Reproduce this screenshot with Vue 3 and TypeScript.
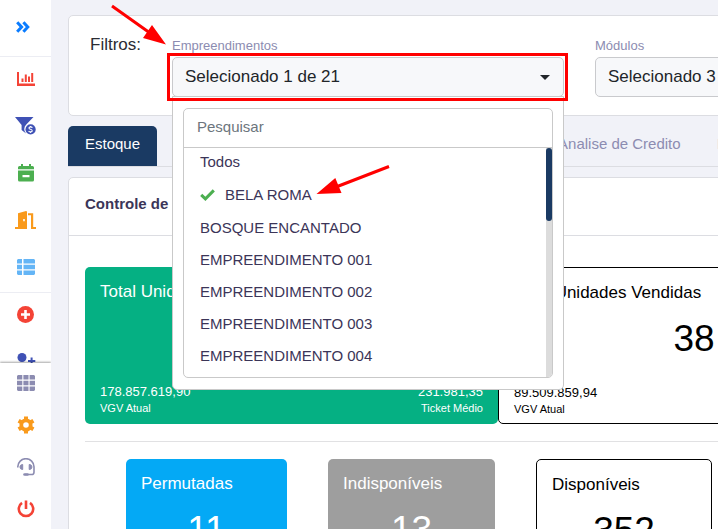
<script setup lang="ts">
import { computed, ref } from 'vue'

interface Option {
  name: string
  selected: boolean
}

const options = ref<Option[]>([
  { name: 'Todos', selected: false },
  { name: 'BELA ROMA', selected: true },
  { name: 'BOSQUE ENCANTADO', selected: false },
  { name: 'EMPREENDIMENTO 001', selected: false },
  { name: 'EMPREENDIMENTO 002', selected: false },
  { name: 'EMPREENDIMENTO 003', selected: false },
  { name: 'EMPREENDIMENTO 004', selected: false },
])

const search = ref('')
const total = 21
const selectedCount = computed(() => options.value.filter((o) => o.selected).length)
const visibleOptions = computed(() =>
  options.value.filter((o) => o.name.toLowerCase().includes(search.value.toLowerCase())),
)

function toggle(option: Option): void {
  option.selected = !option.selected
}
</script>

<template>
  <div class="shell">
    <aside class="rail">
      <button class="expand" type="button">
        <svg width="14" height="12" viewBox="0 0 14 12" fill="none" stroke="#0a7cff" stroke-width="3">
          <path d="M1.200 1.200 5.600 6 1.200 10.800M7.400 1.200 11.800 6 7.400 10.800" />
        </svg>
      </button>
      <nav class="links">
        <div class="group">
          <a href="#" class="item">
            <svg width="18" height="14" viewBox="0 0 18 14" fill="#f44336">
              <path d="M0 0h2v11.6h16V14H0zM4.500 6.500h2V10h-2zM7.800 2.500h2V10h-2zM11 4.500h2V10h-2zM14.200 1h2v9h-2z" />
            </svg>
          </a>
          <a href="#" class="item">
            <svg width="21" height="18" viewBox="0 0 21 18" fill="#3f51b5">
              <path d="M0 0h18.5L11.300 7.600A6 6 0 0 0 11 16.400L6.600 13V8z" />
              <circle cx="15.6" cy="12.4" r="5.1" />
              <path d="M17.4 10.8c-.4-.7-1-.9-1.8-.9-2 0-2.2 2-.3 2.3 2.5.4 2.5 2.7.3 2.700-.9 0-1.600-.3-2-1M15.600 8.900v1M15.600 14.900v1" fill="none" stroke="#fff" stroke-width="1.1" />
            </svg>
          </a>
          <a href="#" class="item">
            <svg width="16" height="18" viewBox="0 0 16 18" fill="#4caf50">
              <path d="M3 0h2v2h6V0h2v2h1.500A1.500 1.500 0 0 1 16 3.500V5.300H0V3.500A1.500 1.500 0 0 1 1.500 2H3z" />
              <path fill-rule="evenodd" d="M0 6.500h16v9.500a1.500 1.500 0 0 1-1.500 1.500h-13A1.500 1.500 0 0 1 0 16zM4.500 11v2.200h7V11z" />
            </svg>
          </a>
          <a href="#" class="item">
            <svg width="21" height="18" viewBox="0 0 21 18" fill="#f99a1c">
              <path fill-rule="evenodd" d="M3 2.200 11 0a1 1 0 0 1 1 1v17H0v-2h3zM8.200 8v2.200h1.600V8z" />
              <path d="M13 2.200h5.200V16H21v2h-5V4.200h-3z" />
            </svg>
          </a>
          <a href="#" class="item">
            <svg width="18" height="16" viewBox="0 0 18 16" fill="#64b5f6">
              <path d="M1 0h4v4.500H0V1zM6.500 0H17l1 1v3.500H6.500zM0 5.700h5v4.500H0zM6.500 5.700H18v4.500H6.500zM0 11.400h5V16H1l-1-1zM6.500 11.400H18V15l-1 1H6.500z" />
            </svg>
          </a>
        </div>
        <div class="group">
          <a href="#" class="item">
            <svg width="17" height="17" viewBox="0 0 17 17">
              <circle cx="8.500" cy="8.500" r="8.500" fill="#f44336" />
              <path d="M8.500 4v9M4 8.500h9" stroke="#fff" stroke-width="2.600" />
            </svg>
          </a>
          <a href="#" class="item">
            <svg width="20" height="18" viewBox="0 0 20 18" fill="#3f51b5">
              <circle cx="6" cy="4.500" r="4.500" />
              <path d="M0 18v-3.500C0 11.500 2 10 4 10h4c2 0 4 1.500 4 4.500V18zM14.600 4.500h2v2.600h2.700v2h-2.700v2.700h-2V9.100H12v-2h2.600z" />
            </svg>
          </a>
        </div>
      </nav>
      <nav class="tools">
        <a href="#" class="tool">
          <svg width="18" height="16" viewBox="0 0 18 16" fill="#8c8cb1">
            <path d="M1 0h4.300v4.500H0V1zM6.400 0h5.100v4.500H6.400zM12.600 0H17l1 1v3.500h-5.400zM0 5.700h5.300v4.500H0zM6.400 5.700h5.100v4.500H6.400zM12.600 5.700H18v4.500h-5.400zM0 11.400h5.300V16H1l-1-1zM6.400 11.400h5.100V16H6.400zM12.600 11.400H18V15l-1 1h-4.400z" />
          </svg>
        </a>
        <a href="#" class="tool">
          <svg width="18" height="18" viewBox="0 0 18 18">
            <circle cx="9" cy="9" r="4.700" fill="none" stroke="#f99a1c" stroke-width="3.800" />
            <path d="M9 .500v3M9 14.500v3M1.600 4.800l2.600 1.500M13.800 11.700l2.600 1.500M1.600 13.200l2.600-1.500M13.800 6.300l2.600-1.500" stroke="#f99a1c" stroke-width="4" />
          </svg>
        </a>
        <a href="#" class="tool">
          <svg width="18" height="18" viewBox="0 0 18 18" fill="none" stroke="#8c8cb1">
            <path d="M.800 9.500V8.800a8 8 0 0 1 16.200 0v5.400a2.300 2.300 0 0 1-2.300 2.300H8" stroke-width="1.600" />
            <path d="M5.700 6.500v5c-1.800 0-2.700-1-2.700-2.500s.900-2.500 2.700-2.500zM12.200 6.500v5c1.800 0 2.700-1 2.700-2.500s-.900-2.500-2.700-2.500z" fill="#8c8cb1" />
            <path d="M7.500 16.500h3" stroke-width="2.600" stroke-linecap="round" />
          </svg>
        </a>
        <a href="#" class="tool">
          <svg width="18" height="18" viewBox="0 0 18 18" fill="none" stroke="#f44336" stroke-width="2.600">
            <path d="M5 2.800a7.200 7.200 0 1 0 8 0M9 .500v8.500" />
          </svg>
        </a>
      </nav>
    </aside>

    <main class="main">
      <section class="panel filters">
        <h2 class="filters-title">Filtros:</h2>
        <div class="field">
          <label class="field-label" for="empreendimentos">Empreendimentos</label>
          <button id="empreendimentos" class="select" type="button" aria-haspopup="listbox">
            <span>Selecionado {{ selectedCount }} de {{ total }}</span>
            <span class="caret"></span>
          </button>
          <div class="menu">
            <div class="menu-box">
              <input v-model="search" class="search" type="text" placeholder="Pesquisar" aria-label="Pesquisar" />
              <div class="menu-scroll">
                <ul class="options">
                  <li v-for="option in visibleOptions" :key="option.name">
                    <button class="option" :class="{ checked: option.selected }" type="button" @click="toggle(option)">
                      <svg v-if="option.selected" width="15" height="12" viewBox="0 0 15 12" fill="none" stroke="#4caf50" stroke-width="3">
                        <path d="M1.200 5.800 5.400 9.800 13.800 1.400" />
                      </svg>
                      <span>{{ option.name }}</span>
                    </button>
                  </li>
                </ul>
                <div class="track"><div class="thumb"></div></div>
              </div>
            </div>
          </div>
        </div>
        <div class="field">
          <label class="field-label" for="modulos">Módulos</label>
          <button id="modulos" class="select" type="button">
            <span>Selecionado 3</span>
            <span class="caret"></span>
          </button>
        </div>
      </section>

      <div class="tabs">
        <button class="tab active" type="button">Estoque</button>
        <div class="tabs-more">
          <button class="tab" type="button">Analise de Credito</button>
          <button class="tab" type="button">I</button>
        </div>
      </div>

      <section class="panel stock">
        <h2 class="stock-title">Controle de Estoque</h2>
        <div class="stock-body">
          <div class="summary">
            <article class="card green">
              <h3 class="card-title">Total Unidades</h3>
              <div class="values">
                <p class="value">178.857.619,90<small>VGV Atual</small></p>
                <p class="value right">231.981,35<small>Ticket Médio</small></p>
              </div>
            </article>
            <article class="card outline">
              <h3 class="card-title">Total Unidades Vendidas</h3>
              <p class="number">38</p>
              <div class="values">
                <p class="value">89.509.859,94<small>VGV Atual</small></p>
              </div>
            </article>
          </div>
          <hr class="rule" />
          <div class="breakdown">
            <article class="card blue">
              <h3 class="card-title">Permutadas</h3>
              <p class="number">11</p>
            </article>
            <article class="card gray">
              <h3 class="card-title">Indisponíveis</h3>
              <p class="number">13</p>
            </article>
            <article class="card outline">
              <h3 class="card-title">Disponíveis</h3>
              <p class="number">352</p>
            </article>
          </div>
        </div>
      </section>
    </main>

    <div class="highlight"></div>
    <svg class="arrows" width="400" height="210" viewBox="0 0 400 210">
      <path d="M112 6 150 33M389 166.500 336 187" stroke="#f00" stroke-width="3" />
      <path d="M166 44.500 152 25 143 38zM316.500 194 335.300 178 341.500 193z" fill="#f00" />
    </svg>
  </div>
</template>

<style>
body {
  background: #f1f2f8;
}
</style>

<style scoped>
* {
  box-sizing: border-box;
  margin: 0;
}

.shell {
  position: relative;
  display: flex;
  height: 100vh;
  overflow: hidden;
  background: #f1f2f8;
  color: #3b3558;
  font-family: "Liberation Sans", Arial, sans-serif;
  font-size: 15px;
}

button,
input {
  padding: 0;
  border: 0;
  background: none;
  color: inherit;
  font: inherit;
}

.rail {
  display: flex;
  flex: none;
  flex-direction: column;
  width: 51px;
  background: #fff;
}

.expand {
  display: flex;
  flex: none;
  align-items: center;
  justify-content: center;
  height: 57px;
  padding: 0 5px 2px 0;
  border-bottom: 1px solid #ecedf3;
}

.links {
  flex: 1;
  min-height: 0;
  overflow: hidden;
}

.group + .group {
  border-top: 1px solid #ecedf3;
}

.item {
  display: flex;
  align-items: center;
  justify-content: center;
  height: 47px;
  padding-bottom: 4px;
}

.tools {
  display: flex;
  flex: none;
  flex-direction: column;
  gap: 24px;
  padding: 11px 0;
  background: #fff;
  box-shadow: 0 -1px 2px rgba(0, 0, 0, 0.35);
  clip-path: inset(-3px 0 0 0);
}

.tool {
  display: flex;
  align-items: center;
  justify-content: center;
  height: 18px;
}

.main {
  flex: 1 0 auto;
  padding: 15px 0 0 17px;
}

.panel {
  border: 1px solid #dcdde2;
  border-radius: 5px;
  background: #fff;
}

.filters {
  display: flex;
  padding: 21px 21px 18px;
}

.filters-title {
  width: 82px;
  color: #2b2c33;
  font-size: 17px;
  font-weight: 400;
  line-height: 16px;
}

.field {
  position: relative;
  flex: 0 0 392px;
  margin-right: 31px;
}

.field-label {
  display: block;
  height: 20px;
  color: #8c8cb1;
  font-size: 13px;
  line-height: 18px;
}

.select {
  display: flex;
  align-items: center;
  justify-content: space-between;
  width: 100%;
  height: 40px;
  padding: 0 13px 0 12px;
  border: 1px solid #c9cacd;
  border-radius: 5px;
  background: #f7f8fa;
  color: #212529;
  font-size: 17px;
}

.caret {
  border: 5px solid transparent;
  border-top-color: #212529;
  border-bottom-width: 0;
}

.menu {
  position: absolute;
  z-index: 2;
  top: 59px;
  right: 0;
  left: 0;
  padding: 11px 10px;
  border: 1px solid #c9c9c9;
  border-radius: 0 0 5px 5px;
  background: #fff;
}

.menu-box {
  overflow: hidden;
  border: 1px solid #c9c9c9;
  border-radius: 5px;
}

.search {
  display: block;
  width: 100%;
  height: 39px;
  padding: 0 13px 3px;
  border-bottom: 1px solid #c9c9c9;
  outline: 0;
}

.search::placeholder {
  color: #6c757d;
  opacity: 1;
}

.menu-scroll {
  display: flex;
  height: 229px;
}

.options {
  flex: 1;
  padding: 0 16px;
  list-style: none;
}

.option {
  display: flex;
  align-items: center;
  gap: 10px;
  width: 100%;
  padding-bottom: 4px;
  line-height: 28px;
  text-align: left;
}

.option.checked {
  line-height: 30px;
}

.track {
  width: 6px;
  background: #dcdcdc;
}

.thumb {
  height: 73px;
  border-radius: 3px;
  background: #1a3a63;
}

.tabs {
  display: flex;
  margin-top: 10px;
  border-bottom: 1px solid #dcdde2;
}

.tabs-more {
  display: flex;
  gap: 2px;
  margin-left: 384px;
}

.tab {
  height: 40px;
  padding: 0 17px 5px;
  color: #8c8cb1;
  white-space: nowrap;
}

.tab.active {
  border-radius: 5px 5px 0 0;
  background: #1a3a63;
  color: #fff;
}

.stock {
  margin-top: 10px;
}

.stock-title {
  padding: 0 16px 5px;
  border-bottom: 1px solid #dcdde2;
  font-size: 15px;
  line-height: 52px;
}

.stock-body {
  padding: 31px 16px;
}

.summary {
  display: grid;
  grid-template-columns: 413px 392px;
}

.card {
  display: flex;
  flex-direction: column;
  padding: 15px 15px 8px;
  border-radius: 5px;
  color: #fff;
}

.summary .card {
  height: 157px;
}

.green {
  background: #05b083;
}

.blue {
  background: #04a9f5;
}

.gray {
  background: #9e9e9e;
}

.outline {
  padding-bottom: 6px;
  border: 1px solid #000;
  background: #fff;
  color: #000;
}

.card-title {
  font-size: 17px;
  font-weight: 400;
  line-height: 20px;
}

.number {
  margin-top: 14px;
  font-size: 37px;
  line-height: 44px;
  text-align: center;
}

.values {
  display: flex;
  justify-content: space-between;
  margin-top: auto;
}

.value {
  font-size: 13px;
  line-height: 16px;
}

.value small {
  display: block;
  font-size: 11px;
}

.right {
  text-align: right;
}

.rule {
  margin: 17px 0;
  border: 0;
  border-top: 1px solid #e1e1e3;
}

.breakdown {
  display: grid;
  grid-template-columns: 161px 167px 176px;
  gap: 41px;
  padding: 0 41px;
}

.highlight {
  position: absolute;
  z-index: 3;
  top: 53px;
  left: 167px;
  width: 401px;
  height: 48px;
  border: 3px solid #f00;
  pointer-events: none;
}

.arrows {
  position: absolute;
  z-index: 3;
  top: 0;
  left: 0;
  pointer-events: none;
}
</style>
